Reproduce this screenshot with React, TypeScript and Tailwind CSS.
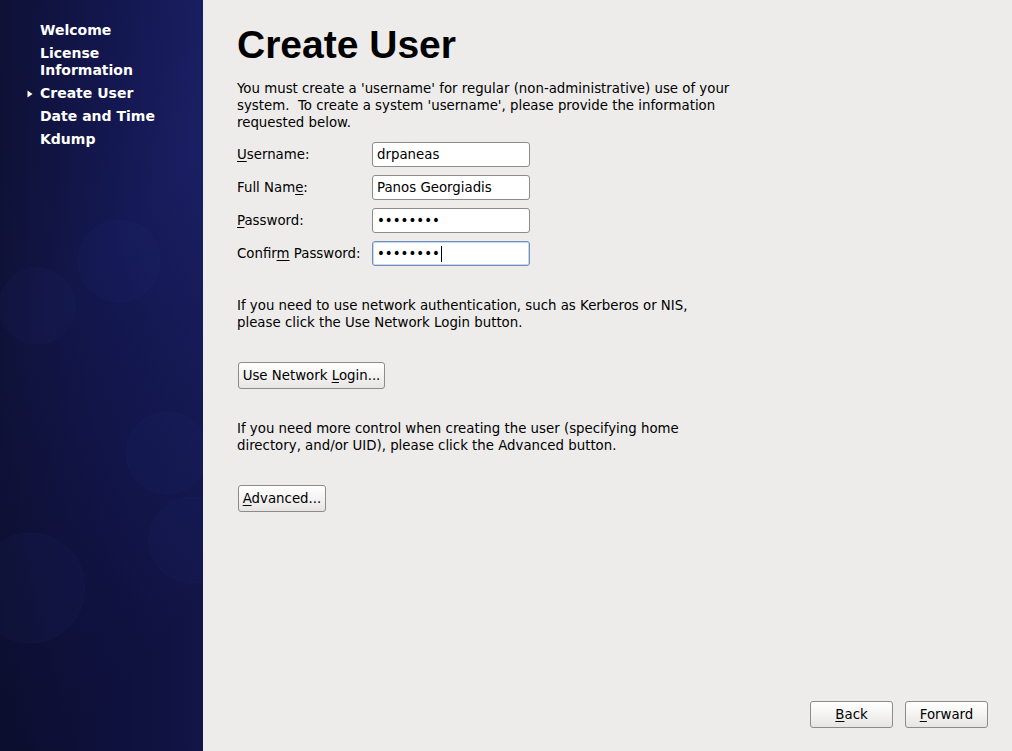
import React from 'react';

const font = { fontFamily: '"DejaVu Sans", Verdana, sans-serif' };

function Mn({ children }: { children: React.ReactNode }) {
  return <span className="underline decoration-1 underline-offset-2">{children}</span>;
}

const navItems = [
  { label: 'Welcome' },
  { label: 'License\nInformation' },
  { label: 'Create User', current: true },
  { label: 'Date and Time' },
  { label: 'Kdump' },
];

function Sidebar() {
  return (
    <aside className="relative w-[203px] shrink-0 overflow-hidden bg-[linear-gradient(90deg,#0f1238_0%,#141852_55%,#1a1f64_100%)]">
      <svg className="absolute inset-0 h-full w-full" viewBox="0 0 203 751" preserveAspectRatio="none">
        <defs>
          <linearGradient id="shade" x1="0" y1="0" x2="0.3" y2="1">
            <stop offset="0" stopColor="#05061a" stopOpacity="0.1" />
            <stop offset="0.45" stopColor="#05061a" stopOpacity="0" />
            <stop offset="1" stopColor="#05061a" stopOpacity="0.4" />
          </linearGradient>
        </defs>
        <rect x="0" y="0" width="203" height="751" fill="url(#shade)" />
        <g fill="#3a48b0" fillOpacity="0.06" stroke="#5060c8" strokeOpacity="0.05">
          <circle cx="119" cy="261" r="41" />
          <circle cx="37" cy="306" r="38" />
          <circle cx="167" cy="453" r="41" />
          <circle cx="192" cy="540" r="43" />
          <circle cx="30" cy="588" r="55" />
        </g>
      </svg>
      <nav className="relative flex flex-col gap-[6px] pl-[40px] pt-[22px] text-[14px] font-bold leading-[17px] text-white" style={font}>
        {navItems.map((item) => (
          <div key={item.label} className="relative whitespace-pre-line">
            {item.current && (
              <svg className="absolute left-[-13px] top-[5px]" width="6" height="8" viewBox="0 0 6 8">
                <polygon points="0.5,0.5 5.5,4 0.5,7.5" fill="#ffffff" />
              </svg>
            )}
            {item.label}
          </div>
        ))}
      </nav>
    </aside>
  );
}

function Field({ label, value, focused }: { label: React.ReactNode; value: string; focused?: boolean }) {
  return (
    <div className="flex h-[25px] items-center">
      <div className="w-[135px]">{label}</div>
      <div
        className={
          'flex h-[25px] w-[158px] items-center rounded-[3px] border bg-white px-[4px] ' +
          (focused ? 'border-[#6e8fbc] shadow-[inset_0_0_0_1px_#c9d7ea]' : 'border-[#8e8c89]')
        }
      >
        <span className="whitespace-pre">{value}</span>
        {focused && <span className="ml-[1px] h-[16px] w-px bg-black" />}
      </div>
    </div>
  );
}

function Btn({ children, className = '' }: { children: React.ReactNode; className?: string }) {
  return (
    <button
      className={
        'flex h-[27px] items-center justify-center rounded-[3px] border border-[#8e8c89] bg-[linear-gradient(180deg,#ffffff_0%,#f4f3f2_50%,#e6e5e3_100%)] px-[4px] text-[13.33px] text-black ' +
        className
      }
      style={font}
    >
      <span className="whitespace-pre">{children}</span>
    </button>
  );
}

export default function App() {
  return (
    <div className="flex h-[751px] w-[1012px] overflow-hidden bg-[#edeceb]">
      <Sidebar />
      <main className="flex flex-1 flex-col pl-[34px] pr-[24px] text-[13.33px] leading-[17px] text-black" style={font}>
        <h1
          className="pt-[23px] text-[39px] font-bold leading-[44px] text-black"
          style={{ fontFamily: '"Liberation Sans", Arial, sans-serif' }}
        >
          Create User
        </h1>
        <p className="mt-[13px]">
          You must create a 'username' for regular (non-administrative) use of your
          <br />
          system.&nbsp; To create a system 'username', please provide the information
          <br />
          requested below.
        </p>
        <div className="mt-[11px] flex flex-col gap-[8px]">
          <Field label={<><Mn>U</Mn>sername:</>} value="drpaneas" />
          <Field label={<>Full Nam<Mn>e</Mn>:</>} value="Panos Georgiadis" />
          <Field label={<><Mn>P</Mn>assword:</>} value="••••••••" />
          <Field label={<>Confir<Mn>m</Mn> Password:</>} value="••••••••" focused />
        </div>
        <p className="mt-[31px]">
          If you need to use network authentication, such as Kerberos or NIS,
          <br />
          please click the Use Network Login button.
        </p>
        <div className="mt-[31px] flex pl-[1px]">
          <Btn className="w-[147px]">
            Use Network <Mn>L</Mn>ogin...
          </Btn>
        </div>
        <p className="mt-[31px]">
          If you need more control when creating the user (specifying home
          <br />
          directory, and/or UID), please click the Advanced button.
        </p>
        <div className="mt-[31px] flex pl-[1px]">
          <Btn className="w-[88px]">
            <Mn>A</Mn>dvanced...
          </Btn>
        </div>
        <div className="mt-auto mb-[23px] flex justify-end gap-[12px]">
          <Btn className="w-[83px]">
            <Mn>B</Mn>ack
          </Btn>
          <Btn className="w-[83px]">
            <Mn>F</Mn>orward
          </Btn>
        </div>
      </main>
    </div>
  );
}
